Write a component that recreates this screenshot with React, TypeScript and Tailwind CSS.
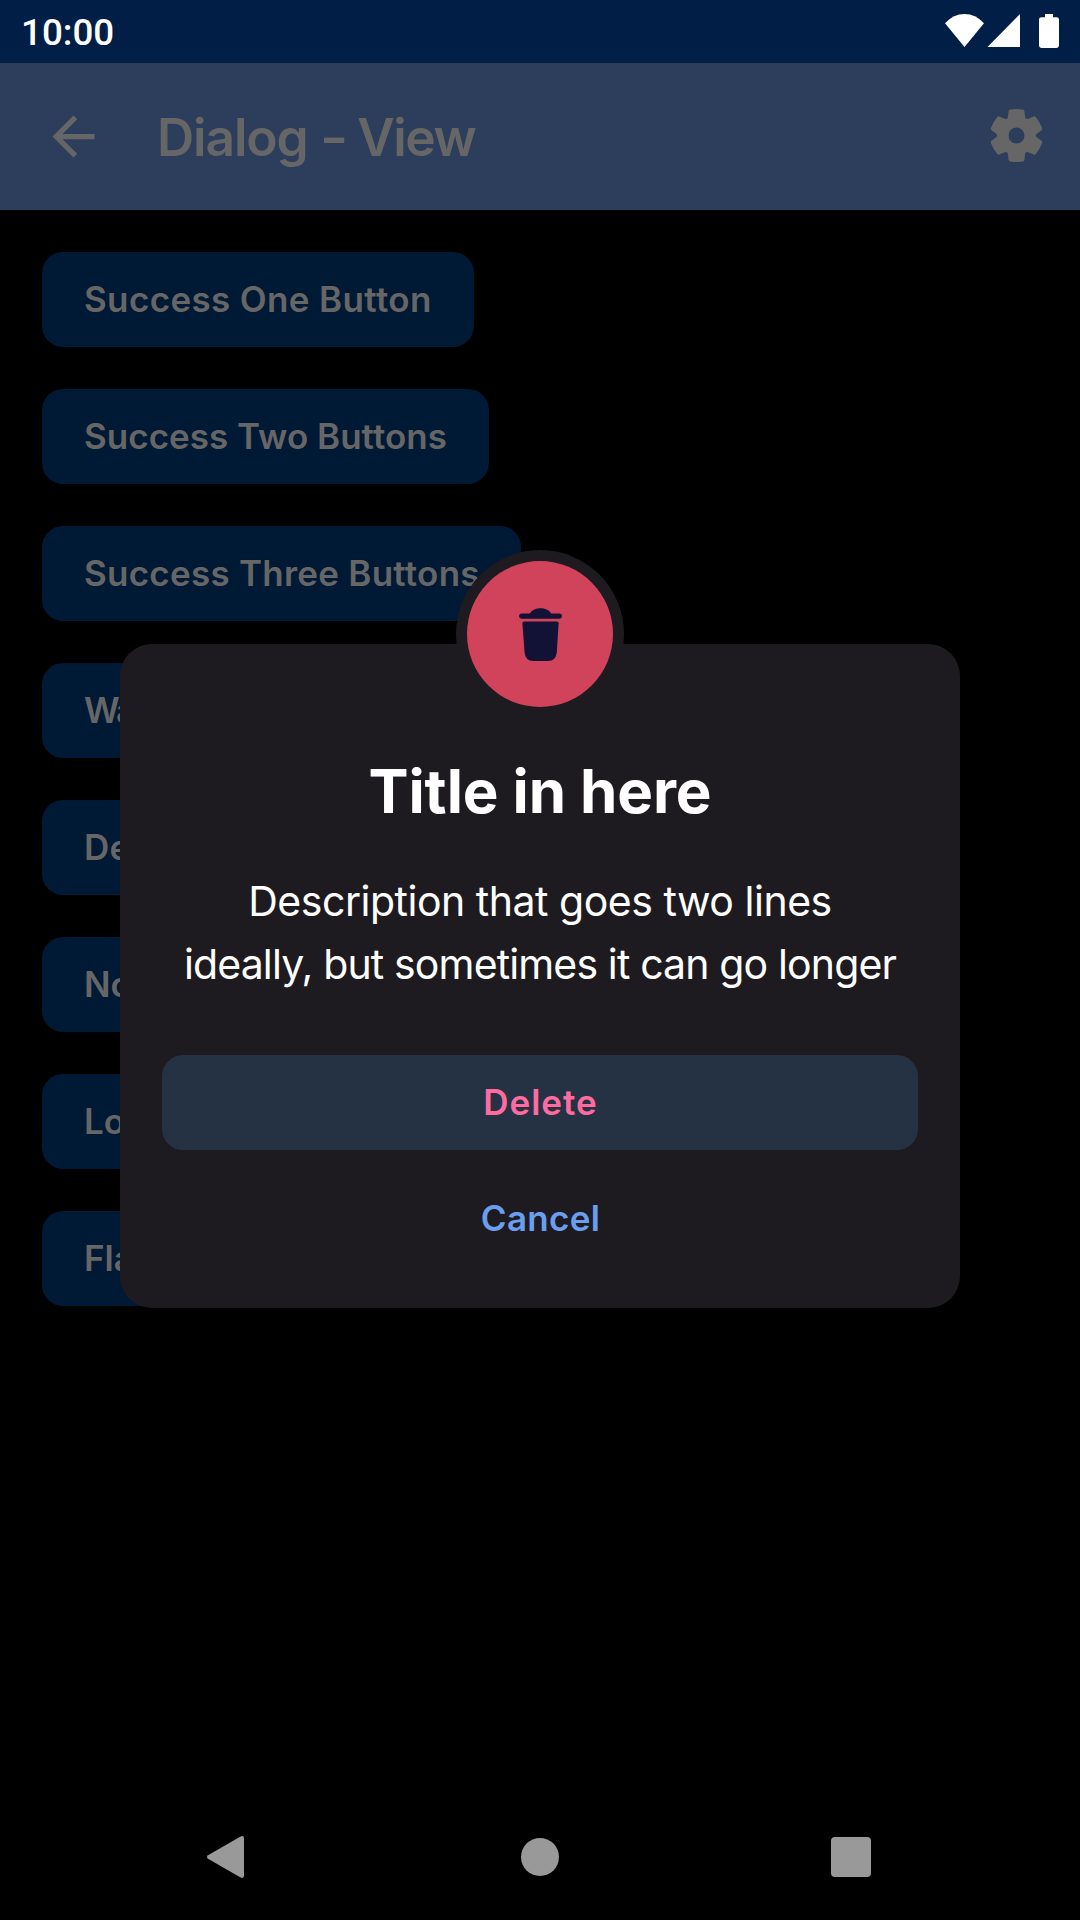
import React from "react";

const actions = [
  { label: "Success One Button", width: "w-[432px]", tracking: "tracking-[0.36px]" },
  { label: "Success Two Buttons", width: "w-[447px]", tracking: "tracking-[0.02px]" },
  { label: "Success Three Buttons", width: "w-[479px]", tracking: "tracking-[0.25px]" },
  { label: "Warning", width: "w-[260px]", tracking: "tracking-[-1.8px]" },
  { label: "Delete", width: "w-[240px]", tracking: "tracking-[0.2px]" },
  { label: "None", width: "w-[220px]", tracking: "tracking-[0px]" },
  { label: "Long", width: "w-[220px]", tracking: "tracking-[0px]" },
  { label: "Flag", width: "w-[220px]", tracking: "tracking-[0px]" },
];

function StatusBar() {
  return (
    <div className="flex h-[63px] items-center justify-between bg-[#001e46] px-[21px]">
      <span className="pt-[2px] font-[Roboto,sans-serif] text-[36.75px] font-medium leading-[43px] text-white">10:00</span>
      <svg className="h-[63px] w-[114px]" viewBox="945 0 114 63" fill="#fff">
        <path d="M964.5 47 945 23.3Q953.5 14 964.5 14T984 23.3Z" />
        <path d="M1020 14V47H987.5Z" />
        <path d="M1045 14h8v3.2h3.6a2.4 2.4 0 0 1 2.4 2.4v26a2.4 2.4 0 0 1-2.4 2.4h-15.2a2.4 2.4 0 0 1-2.4-2.4v-26a2.4 2.4 0 0 1 2.4-2.4h3.6z" />
      </svg>
    </div>
  );
}

function Gear() {
  const angles = [0, 60, 120, 180, 240, 300];
  return (
    <svg className="h-[54px] w-[54px]" viewBox="-27.5 -26.5 54 54" fill="#666">
      <path
        fillRule="evenodd"
        d="M8 0a8 8 0 1 0-16 0a8 8 0 1 0 16 0zM0-18.6a18.6 18.6 0 1 0 0 37.2a18.6 18.6 0 1 0 0-37.2z"
      />
      {angles.map((a) => (
        <path
          key={a}
          transform={`rotate(${a})`}
          d="M-12-14.2C-9.5-16-8.6-17.5-8.4-20L-7.9-24.4Q-7.7-25.6-6.4-25.9Q0-27 6.4-25.9Q7.7-25.6 7.9-24.4L8.4-20C8.6-17.5 9.5-16 12-14.2Z"
        />
      ))}
    </svg>
  );
}

function Header() {
  return (
    <header className="flex h-[147px] items-center bg-[#2c3e5c] pl-[42px] pr-[37px] text-[#666]">
      <svg className="h-[63px] w-[63px]" viewBox="0 0 24 24" fill="currentColor">
        <path d="M20 11H7.83l5.59-5.59L12 4l-8 8 8 8 1.41-1.41L7.83 13H20v-2z" />
      </svg>
      <h1 className="ml-[52px] flex-1 whitespace-nowrap pt-[2px] text-[51.5px] font-semibold leading-[63px] tracking-[-1.1px]">
        Dialog <span className="ml-[2px] mr-[1px] inline-block scale-x-120">-</span>{" "}
        <span className="tracking-[-1.5px]">View</span>
      </h1>
      <div className="-mt-[2px]"><Gear /></div>
    </header>
  );
}

function Dialog() {
  return (
    <section className="absolute left-[120px] top-[644px] flex h-[664px] w-[840px] flex-col items-center rounded-[32px] bg-[#1e1b20] px-[42px] pt-[116px]">
      <div className="absolute -top-[94px] left-[336px] flex h-[168px] w-[168px] items-center justify-center rounded-full bg-[#1e1b20]">
        <div className="flex h-[146px] w-[146px] items-center justify-center rounded-full bg-[#d1435b]">
          <svg className="h-[53px] w-[43px]" viewBox="519 608 43 53" fill="#121236">
            <path d="M529.8 613.4C532 609.8 536 608.2 540.5 608.2S549 609.8 551.2 613.4H559.2A2.6 2.6 0 0 1 559.2 618.8H521.8A2.6 2.6 0 0 1 521.8 613.4Z" />
            <path d="M524 621.4H557Q558.7 621.4 558.6 623.2L556.8 652.5Q556 661 547.8 661H533.2Q525.4 661 524.6 652.5L522.4 623.2Q522.3 621.4 524 621.4Z" />
          </svg>
        </div>
      </div>
      <h2 className="whitespace-nowrap text-[60px] font-bold leading-[63px] tracking-[-0.1px] text-white">Title in here</h2>
      <p className="mt-[47px] flex flex-col items-center whitespace-nowrap text-[41px] leading-[63px] text-white">
        <span className="tracking-[-0.48px]">Description that goes two lines</span>
        <span className="tracking-[-0.86px]">ideally, but sometimes it can go longer</span>
      </p>
      <button className="mt-[59px] h-[95px] w-full shrink-0 rounded-[21px] bg-[#253244] pl-[1px] text-[35px] font-semibold tracking-[1px] text-[#ff6b9f]">Delete</button>
      <button className="mt-[21px] h-[95px] w-full shrink-0 pl-[1px] text-[35px] font-semibold tracking-[0.3px] text-[#6b9eee]">Cancel</button>
    </section>
  );
}

function NavigationBar() {
  return (
    <nav className="mt-auto flex h-[126px] items-center pl-[206px]">
      <svg className="h-[44px] w-[39px]" viewBox="206 1835 39 44" fill="#999">
        <path d="M208 1855.2 240.6 1836.5Q244 1835 244 1838.5V1875.5Q244 1879 240.6 1877.5L208 1858.8Q206 1857 208 1855.2Z" />
      </svg>
      <div className="ml-[276px] h-[38px] w-[38px] rounded-full bg-[#999]" />
      <div className="ml-[272px] h-[40px] w-[40px] rounded-[4px] bg-[#999]" />
    </nav>
  );
}

export default function App() {
  return (
    <div className="relative flex h-[1920px] w-[1080px] flex-col overflow-hidden bg-black font-[Inter,sans-serif]">
      <StatusBar />
      <Header />
      <main className="flex flex-col items-start gap-[42px] px-[42px] pt-[42px]">
        {actions.map((a) => (
          <button
            key={a.label}
            className={`h-[95px] whitespace-nowrap rounded-[21px] bg-[#001934] pl-[42px] text-left text-[35px] font-semibold text-[#666] ${a.width} ${a.tracking}`}
          >
            {a.label}
          </button>
        ))}
      </main>
      <Dialog />
      <NavigationBar />
    </div>
  );
}
